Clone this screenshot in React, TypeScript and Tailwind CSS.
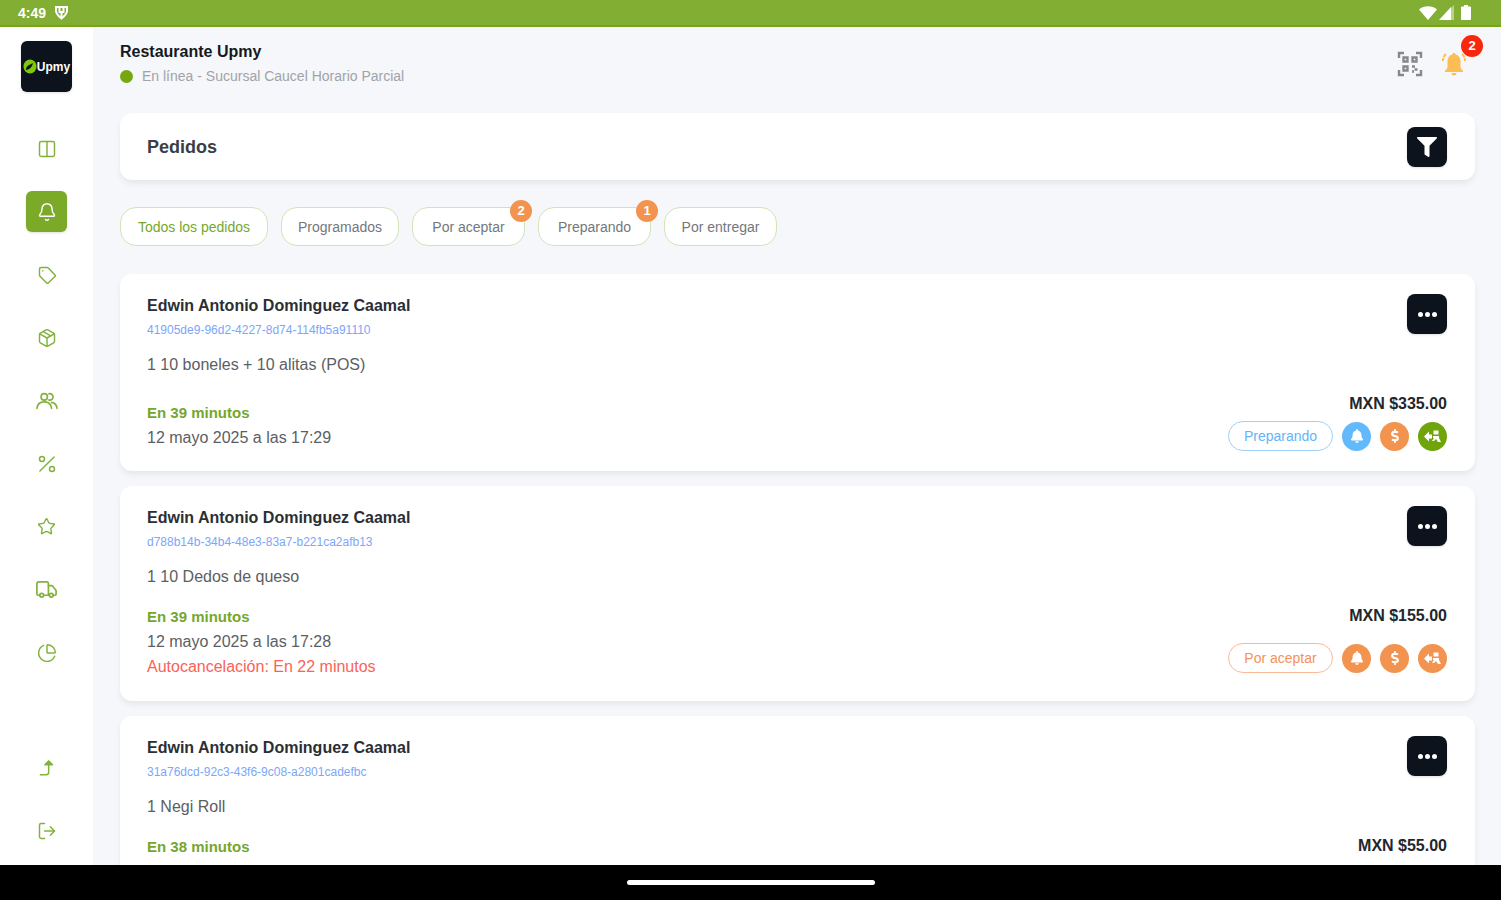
import React from 'react';
import { Bell, ChartPie, Columns2, LogOut, Package, Star, Truck } from 'lucide-react';
import { FaBell, FaDollarSign, FaFilter } from 'react-icons/fa';

type Status = 'preparing' | 'pending';

interface Order {
  id: string;
  customer: string;
  items: string;
  eta: string;
  date?: string;
  autoCancel?: string;
  total: string;
  status?: Status;
}

interface IconProps {
  size?: number | string;
  strokeWidth?: number | string;
}

const orders: Order[] = [
  {
    id: '41905de9-96d2-4227-8d74-114fb5a91110',
    customer: 'Edwin Antonio Dominguez Caamal',
    items: '1 10 boneles + 10 alitas (POS)',
    eta: 'En 39 minutos',
    date: '12 mayo 2025 a las 17:29',
    total: 'MXN $335.00',
    status: 'preparing',
  },
  {
    id: 'd788b14b-34b4-48e3-83a7-b221ca2afb13',
    customer: 'Edwin Antonio Dominguez Caamal',
    items: '1 10 Dedos de queso',
    eta: 'En 39 minutos',
    date: '12 mayo 2025 a las 17:28',
    autoCancel: 'Autocancelación: En 22 minutos',
    total: 'MXN $155.00',
    status: 'pending',
  },
  {
    id: '31a76dcd-92c3-43f6-9c08-a2801cadefbc',
    customer: 'Edwin Antonio Dominguez Caamal',
    items: '1 Negi Roll',
    eta: 'En 38 minutos',
    total: 'MXN $55.00',
  },
];

const filters = [
  { label: 'Todos los pedidos', width: 'w-[148px]', active: true },
  { label: 'Programados', width: 'w-[118px]' },
  { label: 'Por aceptar', width: 'w-[113px]', count: 2 },
  { label: 'Preparando', width: 'w-[113px]', count: 1 },
  { label: 'Por entregar', width: 'w-[113px]' },
];

const TagIcon: React.FC<IconProps> = ({ size = 20, strokeWidth = 2 }) => (
  <svg width={size} height={size} viewBox="0 0 24 24" fill="none" stroke="currentColor" strokeWidth={strokeWidth} strokeLinejoin="round">
    <path d="M3 5v7c0 .6.2 1.100.6 1.500l8 8c.5.500 1.300.5 1.800 0l8.200-7.600c.6-.5.6-1.300 0-1.800l-8-8.500c-.4-.4-.9-.6-1.500-.6H5C3.900 3 3 3.900 3 5z" />
    <path d="M7 7h.01" strokeWidth="2" strokeLinecap="round" />
  </svg>
);

const PeopleIcon: React.FC<IconProps> = ({ size = 22, strokeWidth = 2 }) => (
  <svg width={size} height={size} viewBox="0 0 24 24" fill="none" stroke="currentColor" strokeWidth={strokeWidth} strokeLinecap="round">
    <circle cx="9" cy="7.500" r="3.500" />
    <path d="M14 4.200a3.500 3.500 0 1 1 0 6.600" />
    <path d="M1 20c.5-4.500 3.500-7 8-7s7.500 2.500 8 7" />
    <path d="M17 13.500c3.300.5 5.500 2.800 6 6.500" />
  </svg>
);

const PercentIcon: React.FC<IconProps> = ({ size = 20, strokeWidth = 2 }) => (
  <svg width={size} height={size} viewBox="0 0 24 24" fill="none" stroke="currentColor" strokeWidth={strokeWidth} strokeLinecap="round">
    <path d="M20.500 3.500l-17 17" />
    <circle cx="6" cy="6" r="3" />
    <circle cx="18" cy="18" r="3" />
  </svg>
);

const ShareUpIcon: React.FC<IconProps> = ({ size = 20, strokeWidth = 2 }) => (
  <svg width={size} height={size} viewBox="0 0 24 24" fill="none" stroke="currentColor" strokeWidth={strokeWidth} strokeLinecap="round" strokeLinejoin="round">
    <path d="M4 20h7c2 0 3-1 3-3V4" />
    <path d="M9.500 8 14 3.500 18.500 8z" fill="currentColor" />
  </svg>
);

const navItems = [
  { label: 'Panel', icon: Columns2, size: 20 },
  { label: 'Pedidos', icon: Bell, size: 20, active: true },
  { label: 'Categorías', icon: TagIcon, size: 20 },
  { label: 'Productos', icon: Package, size: 20 },
  { label: 'Clientes', icon: PeopleIcon, size: 22 },
  { label: 'Promociones', icon: PercentIcon, size: 20 },
  { label: 'Reseñas', icon: Star, size: 19 },
  { label: 'Envíos', icon: Truck, size: 23 },
  { label: 'Reportes', icon: ChartPie, size: 20 },
];

const StatusBar: React.FC = () => (
  <div className="flex h-[27px] shrink-0 items-center justify-between border-b-2 border-[#76a713] bg-[#82ae33] pl-[18px] pr-[30px] text-white">
    <div className="flex items-center gap-2">
      <span className="text-[14px] leading-4 font-bold">4:49</span>
      <svg className="h-[14px] w-[15px]" viewBox="0 0 15 14" fill="none" stroke="currentColor" strokeWidth="2">
        <path d="M2 1h11v4c0 3-3 5.500-5.500 7.500C5 10.500 2 8 2 5z" />
        <path d="M5.500 1v5h4V1M7.500 6v6" />
      </svg>
    </div>
    <div className="flex items-center gap-[2px]">
      <svg className="h-[14px] w-[18px]" viewBox="0 0 18 14" fill="currentColor">
        <path d="M0 3.500C5 -.8 13 -.8 18 3.500L9 14z" />
      </svg>
      <svg className="h-[15px] w-4" viewBox="0 0 16 15" fill="currentColor">
        <path d="M0 15 12 2v13z" />
        <path d="M12 3 15 0v15h-3z" opacity=".45" />
      </svg>
      <svg className="ml-1 h-[15px] w-[10px]" viewBox="0 0 10 15" fill="currentColor">
        <path d="M3 0h4v1.500h2.200c.5 0 .8.300.8.800v12c0 .4-.3.700-.8.700H.8c-.5 0-.8-.3-.8-.7v-12c0-.5.300-.8.800-.8H3z" />
      </svg>
    </div>
  </div>
);

const Sidebar: React.FC = () => (
  <aside className="flex w-[93px] shrink-0 flex-col items-center bg-white pt-[14px] pb-[14px]">
    <div className="flex h-[51px] w-[51px] items-center justify-center rounded-md bg-[#0d131c] text-white shadow">
      <svg className="h-[15px] w-[14px] shrink-0" viewBox="0 0 14 15">
        <ellipse cx="7" cy="7.500" rx="6.500" ry="7" fill="#7ec80a" />
        <path d="M3 11c0-4 3-5 7-7-1 4-3 6-5 6.500z" fill="#0d131c" />
      </svg>
      <span className="text-[12px] leading-4 font-bold">Upmy</span>
    </div>
    <nav className="mt-9 flex flex-col gap-[22px]">
      {navItems.map(({ label, icon: Icon, size, active }) => (
        <a
          key={label}
          href="#"
          aria-label={label}
          className={`flex h-[41px] w-[41px] items-center justify-center rounded-md ${
            active ? 'bg-[#7aaa28] text-white shadow' : 'text-[#82b13d]'
          }`}
        >
          <Icon size={size} strokeWidth={1.75} />
        </a>
      ))}
    </nav>
    <div className="mt-auto flex flex-col gap-[22px]">
      <button aria-label="Subir" className="flex h-[41px] w-[41px] items-center justify-center text-[#82b13d]">
        <ShareUpIcon size={20} strokeWidth={1.75} />
      </button>
      <button aria-label="Salir" className="flex h-[41px] w-[41px] items-center justify-center text-[#82b13d]">
        <LogOut size={20} strokeWidth={1.75} />
      </button>
    </div>
  </aside>
);

const ScanIcon: React.FC = () => (
  <svg width="26" height="26" viewBox="0 0 26 26" fill="none" stroke="#85888c" strokeWidth="2.400">
    <path d="M2 7V2h5M19 2h5v5M24 19v5h-5M7 24H2v-5" />
    <path d="M6.500 6.500h4v4h-4zM15.500 6.500h4v4h-4zM6.500 15.500h4v4h-4z" />
    <path d="M15 15.500h3M17.500 18.500h3M15 20.500h2" />
  </svg>
);

const RingingBellIcon: React.FC = () => (
  <svg width="26" height="26" viewBox="0 0 26 26" fill="#fdbd55">
    <path d="M13 2c-1 0-1.600.7-1.600 1.600C8.500 4.300 6.500 7 6.500 10v6c0 1.500-1 2.500-2.500 3.500V21h18v-1.500c-1.500-1-2.500-2-2.500-3.500v-6c0-3-2-5.700-4.900-6.400C14.600 2.700 14 2 13 2zM10.500 22h5c0 1.500-1 2.500-2.500 2.500s-2.500-1-2.500-2.500z" />
    <path
      d="M5 3C3 4.500 2 7 2 10M21 3c2 1.500 3 4 3 7"
      fill="none"
      stroke="#fdbd55"
      strokeWidth="2"
      strokeDasharray="4 1"
    />
  </svg>
);

const Header: React.FC = () => (
  <header className="flex items-start justify-between">
    <div>
      <h1 className="text-[16px] leading-6 font-bold text-[#15191f]">Restaurante Upmy</h1>
      <p className="flex items-center gap-[9px] text-[14px] leading-6 text-[#a0a3a8]">
        <span className="h-[13px] w-[13px] rounded-full bg-[#76a713]" />
        En línea - Sucursal Caucel Horario Parcial
      </p>
    </div>
    <div className="flex gap-[18px] pt-[11px] pr-2">
      <button aria-label="Escanear código">
        <ScanIcon />
      </button>
      <button aria-label="Notificaciones" className="relative">
        <RingingBellIcon />
        <span className="absolute -top-4 -right-4 flex h-[22px] w-[22px] items-center justify-center rounded-full bg-[#f9270d] text-[13px] leading-4 font-bold text-white">
          2
        </span>
      </button>
    </div>
  </header>
);

// Courier arrow on the left, customer on the right
const DeliveryIcon: React.FC = () => (
  <svg width="17" height="14" viewBox="0 0 17 14" fill="currentColor">
    <path d="M0 7.500 5 2.500v3h3v4H5v3z" />
    <path d="M9.500 1.500h5v4h-5z" />
    <path d="M9 7h6v2l2 4h-3l-2-3-2 2H8l2-3H9z" />
  </svg>
);

const OrderCard: React.FC<{ order: Order }> = ({ order }) => {
  const preparing = order.status === 'preparing';
  const dot = 'flex h-[29px] w-[29px] items-center justify-center rounded-full text-white';

  return (
    <article
      className={`flex justify-between rounded-xl bg-white pr-7 pl-[27px] pt-5 shadow-md shadow-gray-200 ${
        preparing ? 'pb-5' : 'pb-[22px]'
      }`}
    >
      <div>
        <h3 className="text-[16px] leading-6 font-bold text-[#2b2f35]">{order.customer}</h3>
        <a href="#" className="block text-[12px] leading-6 text-[#7ca6fa]">
          {order.id}
        </a>
        <p className="mt-[11px] text-[16px] leading-6 text-[#5b5e63]">{order.items}</p>
        <p className={`text-[15px] leading-6 font-bold text-[#76a72c] ${preparing ? 'mt-6' : 'mt-4'}`}>{order.eta}</p>
        {order.date && <p className="mt-px text-[16px] leading-6 text-[#5b5e63]">{order.date}</p>}
        {order.autoCancel && <p className="mt-px text-[16px] leading-6 text-[#fb6257]">{order.autoCancel}</p>}
      </div>
      <div className="flex flex-col items-end">
        <button
          aria-label="Más opciones"
          className="flex h-10 w-10 items-center justify-center gap-[2px] rounded-lg bg-[#0d131c] shadow"
        >
          <span className="h-[5px] w-[5px] rounded-full bg-white" />
          <span className="h-[5px] w-[5px] rounded-full bg-white" />
          <span className="h-[5px] w-[5px] rounded-full bg-white" />
        </button>
        <p className="mt-[58px] text-[16px] leading-6 font-bold text-[#23262b]">{order.total}</p>
        {order.status && (
          <div className={`flex items-center gap-[9px] ${preparing ? 'mt-[5px]' : 'mt-[15px]'}`}>
            <span
              className={`flex h-[30px] w-[105px] items-center justify-center rounded-full border text-[14px] leading-5 ${
                preparing ? 'border-[#9fd0fb] text-[#62b5fa]' : 'border-[#fbb99a] text-[#f5925a]'
              }`}
            >
              {preparing ? 'Preparando' : 'Por aceptar'}
            </span>
            <span className={`${dot} ${preparing ? 'bg-[#62b9fc]' : 'bg-[#f39350]'}`}>
              <FaBell size={14} />
            </span>
            <span className={`${dot} bg-[#f39350]`}>
              <FaDollarSign size={14} />
            </span>
            <span className={`${dot} ${preparing ? 'bg-[#70a40b]' : 'bg-[#f39350]'}`}>
              <DeliveryIcon />
            </span>
          </div>
        )}
      </div>
    </article>
  );
};

const App: React.FC = () => {
  return (
    <div className="flex h-screen flex-col overflow-hidden bg-[#f6f7fa] font-['Liberation_Sans',Arial,sans-serif]">
      <StatusBar />
      <div className="flex min-h-0 flex-1">
        <Sidebar />
        <main className="min-w-0 flex-1 overflow-hidden pt-[13px] pr-[26px] pl-[27px]">
          <Header />

          <section className="mt-[25px] flex h-[67px] items-center justify-between rounded-xl bg-white pr-7 pl-[27px] shadow-md shadow-gray-200">
            <h2 className="text-[18px] leading-6 font-bold text-[#3b3f45]">Pedidos</h2>
            <button
              aria-label="Filtrar"
              className="flex h-10 w-10 items-center justify-center rounded-lg bg-[#0d131c] text-white shadow"
            >
              <FaFilter size={20} />
            </button>
          </section>

          {/* Filters */}
          <div className="mt-[27px] flex gap-[13px]">
            {filters.map((filter) => (
              <button
                key={filter.label}
                className={`relative h-[39px] rounded-2xl border border-[#d3e3b8] bg-white text-[14px] leading-5 ${filter.width} ${
                  filter.active ? 'text-[#76a72c]' : 'text-[#74777c]'
                }`}
              >
                {filter.label}
                {filter.count && (
                  <span className="absolute -top-2 -right-2 flex h-[22px] w-[22px] items-center justify-center rounded-full bg-[#f39350] text-[13px] leading-4 font-bold text-white">
                    {filter.count}
                  </span>
                )}
              </button>
            ))}
          </div>

          {/* Orders */}
          <div className="mt-7 flex flex-col gap-[15px]">
            {orders.map((order) => (
              <OrderCard key={order.id} order={order} />
            ))}
          </div>
        </main>
      </div>

      {/* Gesture bar */}
      <div className="flex h-[35px] shrink-0 items-center justify-center bg-black">
        <div className="h-[5px] w-[248px] rounded-full bg-white" />
      </div>
    </div>
  );
};

export default App;
